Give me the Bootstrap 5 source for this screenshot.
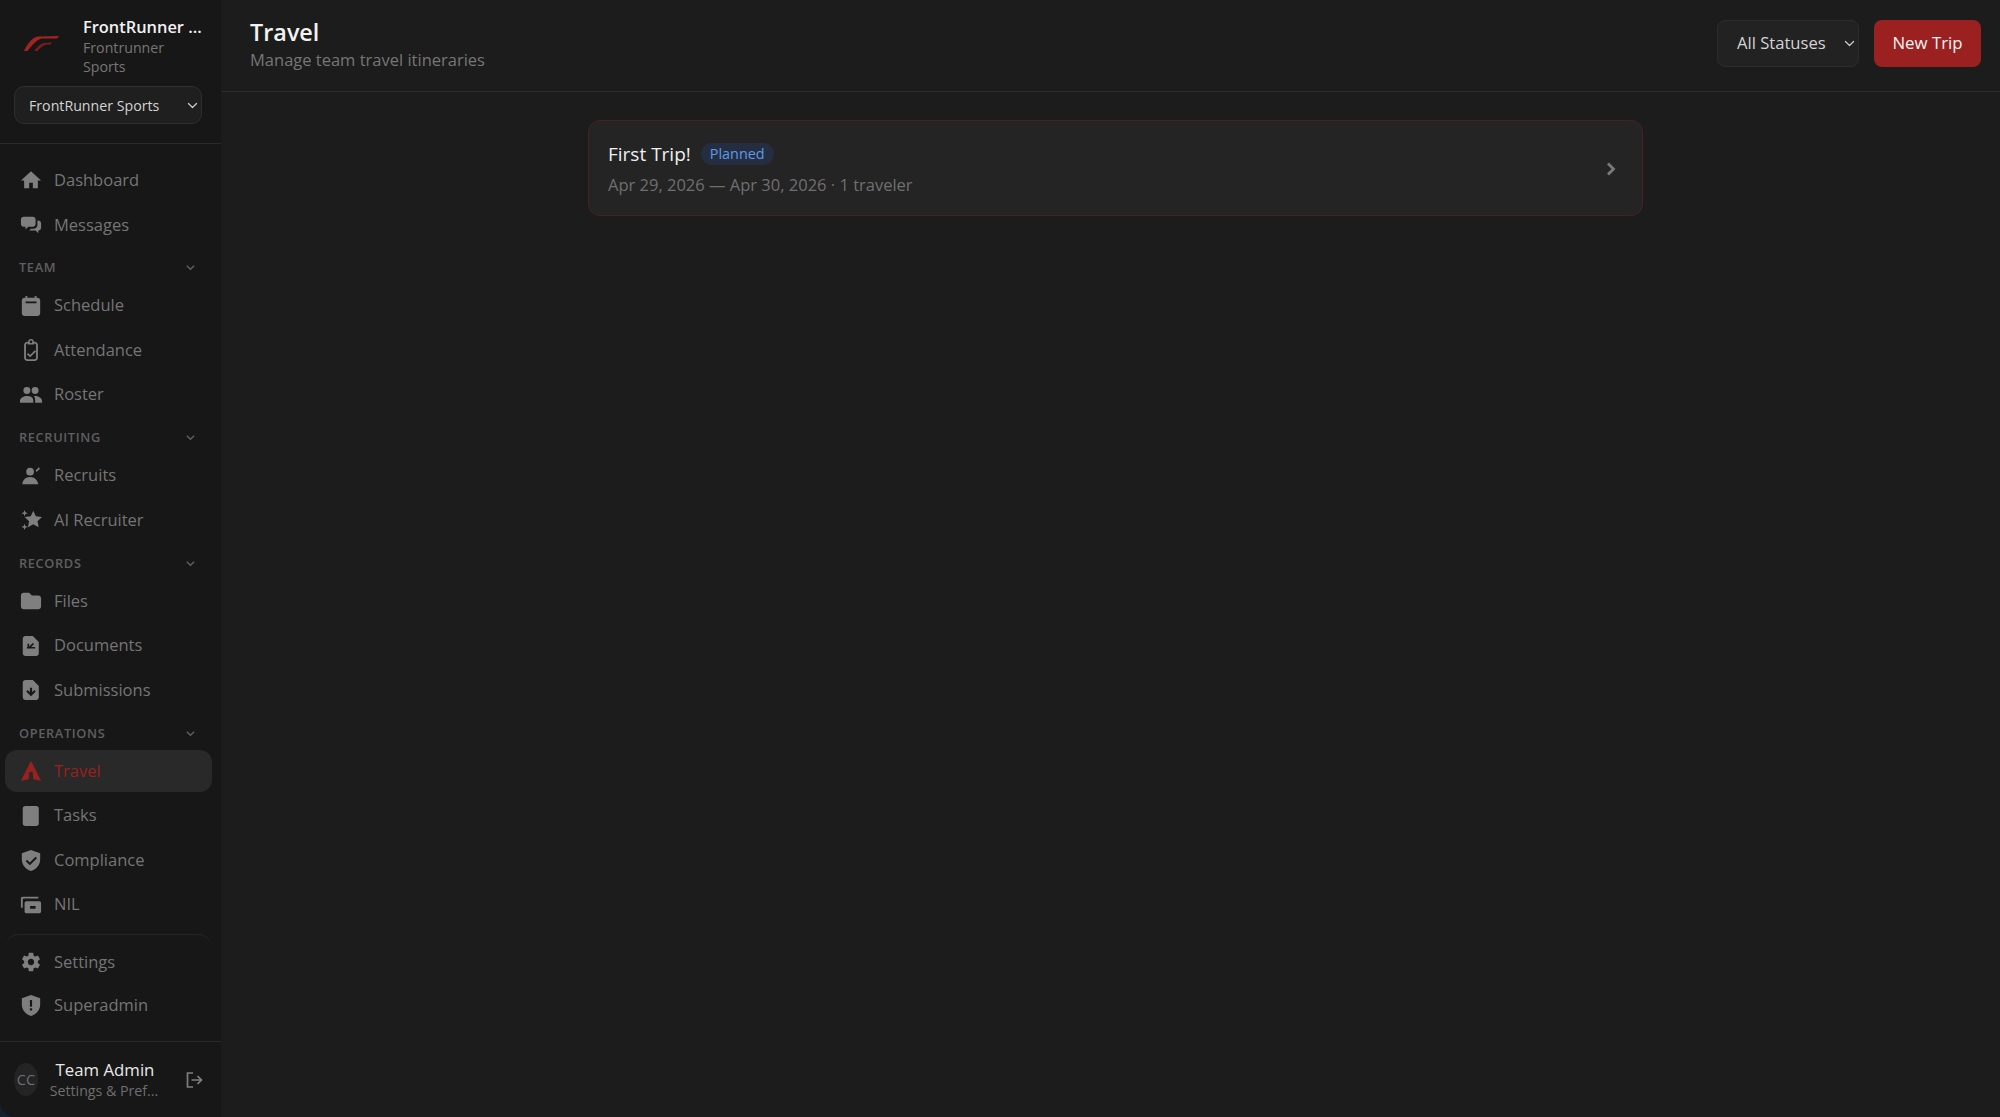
<!DOCTYPE html>
<html lang="en">
  <head>
    <meta charset="UTF-8" />
    <meta name="viewport" content="width=device-width, initial-scale=1.0" />
    <title>Travel</title>
    <link
      rel="stylesheet"
      href="https://cdn.jsdelivr.net/npm/bootstrap@5.3.0/dist/css/bootstrap.min.css"
    />
    <style>
      body {
        font-family: "Open Sans", "Liberation Sans", sans-serif;
        background: #14202c;
        color: #e6e6e6;
        overflow: hidden;
      }
      .app-shell {
        height: 1117px;
        background: #1c1c1c;
        border-radius: 0 0 0 16px;
        overflow: hidden;
      }
      .side-panel {
        width: 221px;
        background: #171717;
      }
      .brand-box {
        padding: 16px 19px 19px 14px;
        border-bottom: 1px solid #2b2b2b;
      }
      .brand-row {
        margin-bottom: 10px;
      }
      .brand-logo {
        width: 35px;
        height: 15px;
        margin: 0 24px 5px 10px;
      }
      .brand-name {
        font-size: 16.4px;
        font-weight: 600;
        line-height: 22px;
        color: #f2f2f2;
        white-space: nowrap;
      }
      .brand-sub {
        font-size: 14.2px;
        line-height: 19px;
        color: #767676;
      }
      .dark-select {
        background-color: #1f1f1f;
        border: 1px solid #2e2e2e;
        color: #d4d4d4;
        --bs-form-select-bg-img: url("data:image/svg+xml,%3csvg xmlns='http://www.w3.org/2000/svg' viewBox='0 0 16 16'%3e%3cpath fill='none' stroke='%23cccccc' stroke-linecap='round' stroke-linejoin='round' stroke-width='1.5' d='m3 5.500 5 5 5-5'/%3e%3c/svg%3e");
        background-size: 13px 13px;
        background-position: right 2px center;
      }
      .org-select {
        height: 38px;
        font-size: 14.2px;
        border-radius: 10px;
        padding: 1px 20px 0 14px;
      }
      .side-nav {
        padding: 15px 9px 0 5px;
      }
      .side-link {
        height: 42.6px;
        margin-bottom: 2px;
        padding: 0 0 0 15px;
        gap: 12px;
        font-size: 16.5px;
        color: #757575;
        border-radius: 12px;
      }
      .side-link:hover {
        color: #757575;
      }
      .side-link svg {
        width: 22px;
        height: 22px;
        flex: none;
        fill: #7f7f7f;
      }
      .side-link.is-current {
        background: #292929;
        color: #9b2020;
      }
      .side-link.is-current svg {
        fill: #9b2020;
      }
      .group-head {
        height: 36.2px;
        padding: 3px 16px 0 14px;
        font-size: 12.8px;
        font-weight: 600;
        letter-spacing: 0.05em;
        color: #5f5f5f;
      }
      .group-head svg {
        width: 11px;
        height: 11px;
      }
      .side-bottom {
        margin: 6px 9px 0 5px;
        padding-top: 6px;
        border-top: 1px solid #262626;
        border-radius: 14px 14px 0 0;
      }
      .side-bottom .side-link {
        margin-bottom: 0;
      }
      .user-box {
        height: 76px;
        padding: 0 18px 0 14px;
        border-top: 1px solid #2b2b2b;
      }
      .user-avatar {
        width: 24px;
        height: 33px;
        border-radius: 50%;
        background: #242424;
        color: #6f6f6f;
        font-size: 14.5px;
        flex: none;
      }
      .user-text {
        width: 112px;
        margin-left: 10px;
      }
      .user-name {
        font-size: 16.8px;
        font-weight: 500;
        line-height: 22px;
        color: #e8e8e8;
        padding-left: 2px;
      }
      .user-sub {
        font-size: 14.2px;
        line-height: 20px;
        color: #6f6f6f;
        white-space: nowrap;
      }
      .top-head {
        height: 92px;
        padding: 0 19px 5px 29px;
        border-bottom: 1px solid #2b2b2b;
      }
      .head-actions {
        gap: 15px;
      }
      .page-title {
        font-size: 23.4px;
        font-weight: 600;
        line-height: 32px;
        color: #f2f2f2;
        margin: 0;
      }
      .page-sub {
        font-size: 16.5px;
        line-height: 23px;
        color: #767676;
      }
      .status-select {
        width: 142px;
        height: 47px;
        font-size: 16.6px;
        border-radius: 8px;
        padding: 1px 20px 0 19px;
        background-color: #222;
        border-color: #2d2d2d;
      }
      .new-trip {
        height: 47px;
        width: 107px;
        padding: 0;
        font-size: 16.8px;
        font-weight: 500;
        border-radius: 8px;
        background: #9b2020;
        border: none;
        color: #f5f5f5;
      }
      .page-body {
        padding: 28px 19px 0 29px;
      }
      .trip-card {
        width: 1055px;
        height: 96px;
        padding: 1px 25px 0 19px;
        background: #242424;
        border: 1px solid #472222;
        border-radius: 12px;
      }
      .trip-head {
        gap: 10px;
      }
      .trip-title {
        font-size: 19px;
        font-weight: 500;
        line-height: 26px;
        color: #f0f0f0;
      }
      .trip-status {
        font-size: 14.4px;
        font-weight: 500;
        line-height: 22px;
        padding: 0 9px;
        border-radius: 11px;
        background: #252e40;
        color: #5b9be8;
      }
      .trip-meta {
        font-size: 16.5px;
        line-height: 24px;
        color: #6f6f6f;
        margin-top: 6px;
      }
    </style>
  </head>
  <body>
    <div class="app-shell d-flex">
      <aside class="side-panel d-flex flex-column flex-shrink-0">
        <div class="brand-box">
          <div class="brand-row d-flex align-items-center">
            <svg class="brand-logo flex-shrink-0" viewBox="0 0 35 15">
              <path fill="#a32222" d="M0 15C4 7 8 1.500 14 .5L35 0l-2 2.500H18C13 3.500 8 9 3.500 15z" />
              <path fill="#7c1c1c" d="M10 15c3-4 6-7 10-8l8-.5-1.500 2H22c-3 1-6 3.500-8.500 6.500z" />
            </svg>
            <div class="overflow-hidden">
              <div class="brand-name">FrontRunner ...</div>
              <div class="brand-sub">Frontrunner<br />Sports</div>
            </div>
          </div>
          <select class="form-select dark-select org-select">
            <option>FrontRunner Sports</option>
          </select>
        </div>

        <nav class="side-nav nav flex-column flex-nowrap">
          <a class="nav-link side-link d-flex align-items-center" href="#">
            <svg viewBox="0 0 24 24"><path d="M10 21v-6h4v6h5.500v-8.500H23L12 2.500 1 12.500h3.500V21z" /></svg>Dashboard
          </a>
          <a class="nav-link side-link d-flex align-items-center" href="#">
            <svg viewBox="0 0 24 24"><path d="M4 3h10c1.700 0 3 1.300 3 3v5c0 1.700-1.300 3-3 3H9l-3 3v-3H4c-1.700 0-3-1.300-3-3V6c0-1.700 1.300-3 3-3zm15 4h1c1.700 0 3 1.300 3 3v5c0 1.700-1.300 3-3 3v3l-3-3h-5l-2 0 2-2h3c2.200 0 4-1.800 4-4z" /></svg>Messages
          </a>

          <div class="group-head d-flex align-items-center justify-content-between">
            TEAM
            <svg viewBox="0 0 12 12"><path fill="none" stroke="#5f5f5f" stroke-width="1.500" d="m2 4 4 4 4-4" /></svg>
          </div>
          <a class="nav-link side-link d-flex align-items-center" href="#">
            <svg viewBox="0 0 24 24"><path fill-rule="evenodd" d="M6 1h2v2h8V1h2v2h1c1.700 0 3 1.300 3 3v14c0 1.700-1.300 3-3 3H5c-1.700 0-3-1.300-3-3V6c0-1.700 1.300-3 3-3h1zm0 6v2h12V7z" /></svg>Schedule
          </a>
          <a class="nav-link side-link d-flex align-items-center" href="#">
            <svg viewBox="0 0 24 24"><path fill-rule="evenodd" d="M12 0a3 3 0 0 1 3 3h1c2 0 3.500 1.500 3.500 3.500v14c0 2-1.500 3.500-3.500 3.500H8c-2 0-3.500-1.500-3.500-3.500v-14C4.500 4.500 6 3 8 3h1a3 3 0 0 1 3-3zM8 5c-1 0-1.500.6-1.500 1.500v14c0 .9.500 1.500 1.500 1.500h8c1 0 1.500-.6 1.500-1.500v-14C17.500 5.600 17 5 16 5h-.5v1h-7V5zm8.200 7.200 1.300 1.300-6.500 6.500-3.500-3.500 1.300-1.300 2.200 2.200zM12 1.500A1.500 1.500 0 1 0 12 4.500 1.500 1.500 0 0 0 12 1.500z" /></svg>Attendance
          </a>
          <a class="nav-link side-link d-flex align-items-center" href="#">
            <svg viewBox="0 0 24 24"><path d="M16.500 11a3.800 3.800 0 1 0 0-7.600 3.800 3.800 0 0 0 0 7.600zm-9 0a3.800 3.800 0 1 0 0-7.600 3.800 3.800 0 0 0 0 7.600zm0 2C4.500 13 0 15 0 18v2.500h14.500V18c0-1.800-1-3.200-2.400-4C10.800 13.300 9 13 7.500 13zm9 0c-.5 0-1 0-1.500.1 1.200 1.100 1.500 2.900 1.500 4.900v2.500H24V18c0-3-4.500-5-7.500-5z" /></svg>Roster
          </a>

          <div class="group-head d-flex align-items-center justify-content-between">
            RECRUITING
            <svg viewBox="0 0 12 12"><path fill="none" stroke="#5f5f5f" stroke-width="1.500" d="m2 4 4 4 4-4" /></svg>
          </div>
          <a class="nav-link side-link d-flex align-items-center" href="#">
            <svg viewBox="0 0 24 24"><path d="M11 11.500a4.200 4.200 0 1 0 0-8.400 4.200 4.200 0 0 0 0 8.400zM2.500 21c.5-5 3.800-8 8.500-8s8 3 9 8zM17 6l3.500-3.500 1.300 1.500-3.800 3.500z" /></svg>Recruits
          </a>
          <a class="nav-link side-link d-flex align-items-center" href="#">
            <svg viewBox="0 0 24 24"><path d="M14.500 2l2.800 6 6.700.8-4.900 4.500 1.300 6.700-5.900-3.300-5.900 3.300 1.300-6.700L5 8.800l6.700-.8zM5 1l.9 2.600 2.600.9-2.600.9L5 8l-.9-2.600L1.500 4.500l2.600-.9zM5 16l.9 2.600 2.600.9-2.600.9L5 23l-.9-2.600-2.600-.9 2.600-.9z" /></svg>AI Recruiter
          </a>

          <div class="group-head d-flex align-items-center justify-content-between">
            RECORDS
            <svg viewBox="0 0 12 12"><path fill="none" stroke="#5f5f5f" stroke-width="1.500" d="m2 4 4 4 4-4" /></svg>
          </div>
          <a class="nav-link side-link d-flex align-items-center" href="#">
            <svg viewBox="0 0 24 24"><path d="M4 3h6l3 3h7c1.700 0 3 1.300 3 3v9c0 1.700-1.300 3-3 3H4c-1.700 0-3-1.300-3-3V6c0-1.700 1.300-3 3-3z" /></svg>Files
          </a>
          <a class="nav-link side-link d-flex align-items-center" href="#">
            <svg viewBox="0 0 24 24"><path fill-rule="evenodd" d="M6 1h8l6.500 6.500V20c0 1.700-1.300 3-3 3H6c-1.700 0-3-1.300-3-3V4c0-1.700 1.300-3 3-3zm1.500 12v1.800h9V13h-4.300l3.100-3.100-1.300-1.300-4 4V9.500H8.200V13z" /></svg>Documents
          </a>
          <a class="nav-link side-link d-flex align-items-center" href="#">
            <svg viewBox="0 0 24 24"><path fill-rule="evenodd" d="M6 1h8l6.500 6.500V20c0 1.700-1.300 3-3 3H6c-1.700 0-3-1.300-3-3V4c0-1.700 1.300-3 3-3zm4.800 8.500v5l-2.500-2.500-1.500 1.500 5.200 5.200 5.200-5.200-1.500-1.500-2.500 2.500v-5z" /></svg>Submissions
          </a>

          <div class="group-head d-flex align-items-center justify-content-between">
            OPERATIONS
            <svg viewBox="0 0 12 12"><path fill="none" stroke="#5f5f5f" stroke-width="1.500" d="m2 4 4 4 4-4" /></svg>
          </div>
          <a class="nav-link side-link is-current d-flex align-items-center" href="#">
            <svg viewBox="0 0 24 24"><path d="M12 1 23 22.500 14.500 21l-.5-7c-.1-1.500-3.900-1.500-4 0l-.5 7L1 22.500z" /></svg>Travel
          </a>
          <a class="nav-link side-link d-flex align-items-center" href="#">
            <svg viewBox="0 0 24 24"><rect x="3" y="1" width="17.500" height="22" rx="3" /></svg>Tasks
          </a>
          <a class="nav-link side-link d-flex align-items-center" href="#">
            <svg viewBox="0 0 24 24"><path fill-rule="evenodd" d="M12 1l10 3.500v7c0 6-4 10.500-10 12.500C6 22 2 17.500 2 11.500v-7zm5 7.500-6.300 6.300-3-3-1.500 1.500 4.500 4.500 7.800-7.800z" /></svg>Compliance
          </a>
          <a class="nav-link side-link d-flex align-items-center" href="#">
            <svg viewBox="0 0 24 24"><path fill-rule="evenodd" d="M3 3h17v2H4c-.6 0-1 .4-1 1v9H1V5c0-1.100.9-2 2-2zm4 5h14c1.100 0 2 .9 2 2v9c0 1.100-.9 2-2 2H7c-1.100 0-2-.9-2-2v-9c0-1.100.9-2 2-2zm4 5v3h6v-3z" /></svg>NIL
          </a>
        </nav>

        <div class="side-bottom">
          <a class="nav-link side-link d-flex align-items-center" href="#">
            <svg viewBox="0 0 24 24"><path d="M19.430 12.980c.04-.32.070-.64.070-.98s-.03-.66-.07-.98l2.110-1.650c.19-.15.240-.42.120-.64l-2-3.460c-.12-.22-.39-.30-.61-.22l-2.490 1c-.52-.40-1.080-.73-1.690-.98l-.38-2.650C14.460 2.180 14.250 2 14 2h-4c-.25 0-.46.18-.49.42l-.38 2.650c-.61.25-1.170.59-1.690.98l-2.490-1c-.23-.09-.49 0-.61.22l-2 3.460c-.13.220-.07.490.12.640l2.110 1.650c-.04.320-.07.650-.07.980s.03.660.07.980l-2.110 1.650c-.19.150-.24.420-.12.640l2 3.460c.12.220.39.300.61.220l2.490-1c.52.400 1.080.730 1.690.980l.38 2.650c.03.240.24.420.49.420h4c.25 0 .46-.18.490-.42l.38-2.650c.61-.25 1.170-.59 1.690-.98l2.490 1c.23.090.49 0 .61-.22l2-3.460c.12-.22.070-.49-.12-.64l-2.110-1.650zM12 15.500c-1.930 0-3.500-1.570-3.500-3.500s1.570-3.500 3.500-3.500 3.500 1.570 3.500 3.500-1.570 3.500-3.500 3.500z" /></svg>Settings
          </a>
          <a class="nav-link side-link d-flex align-items-center" href="#">
            <svg viewBox="0 0 24 24"><path fill-rule="evenodd" d="M12 1l10 3.500v7c0 6-4 10.500-10 12.500C6 22 2 17.500 2 11.500v-7zM10.800 6.500v7.500h2.400V6.500zm0 9v2.500h2.400v-2.500z" /></svg>Superadmin
          </a>
        </div>

        <div class="user-box d-flex align-items-center mt-auto">
          <div class="user-avatar d-flex align-items-center justify-content-center">CC</div>
          <div class="user-text text-center overflow-hidden">
            <div class="user-name">Team Admin</div>
            <div class="user-sub">Settings &amp; Pref...</div>
          </div>
          <svg class="flex-shrink-0 ms-auto" width="18" height="18" viewBox="0 0 18 18" fill="none" stroke="#7f7f7f" stroke-width="1.700">
            <path d="M8 2H2.500v14H8M6.500 9h10M12.500 5l4 4-4 4" />
          </svg>
        </div>
      </aside>

      <main class="flex-grow-1">
        <header class="top-head d-flex align-items-center justify-content-between">
          <div>
            <h1 class="page-title">Travel</h1>
            <div class="page-sub">Manage team travel itineraries</div>
          </div>
          <div class="head-actions d-flex align-items-center">
            <select class="form-select dark-select status-select">
              <option>All Statuses</option>
            </select>
            <button class="btn new-trip">New Trip</button>
          </div>
        </header>
        <div class="page-body">
          <div class="trip-card d-flex align-items-center justify-content-between mx-auto">
            <div>
              <div class="trip-head d-flex align-items-center">
                <span class="trip-title">First Trip!</span>
                <span class="trip-status">Planned</span>
              </div>
              <div class="trip-meta">Apr 29, 2026 — Apr 30, 2026 · 1 traveler</div>
            </div>
            <svg width="12" height="16" viewBox="0 0 12 16" fill="none" stroke="#7a7a7a" stroke-width="2.800">
              <path d="m3 2.500 5.500 5.500L3 13.500" />
            </svg>
          </div>
        </div>
      </main>
    </div>
    <script src="https://cdn.jsdelivr.net/npm/bootstrap@5.3.0/dist/js/bootstrap.bundle.min.js"></script>
  </body>
</html>
